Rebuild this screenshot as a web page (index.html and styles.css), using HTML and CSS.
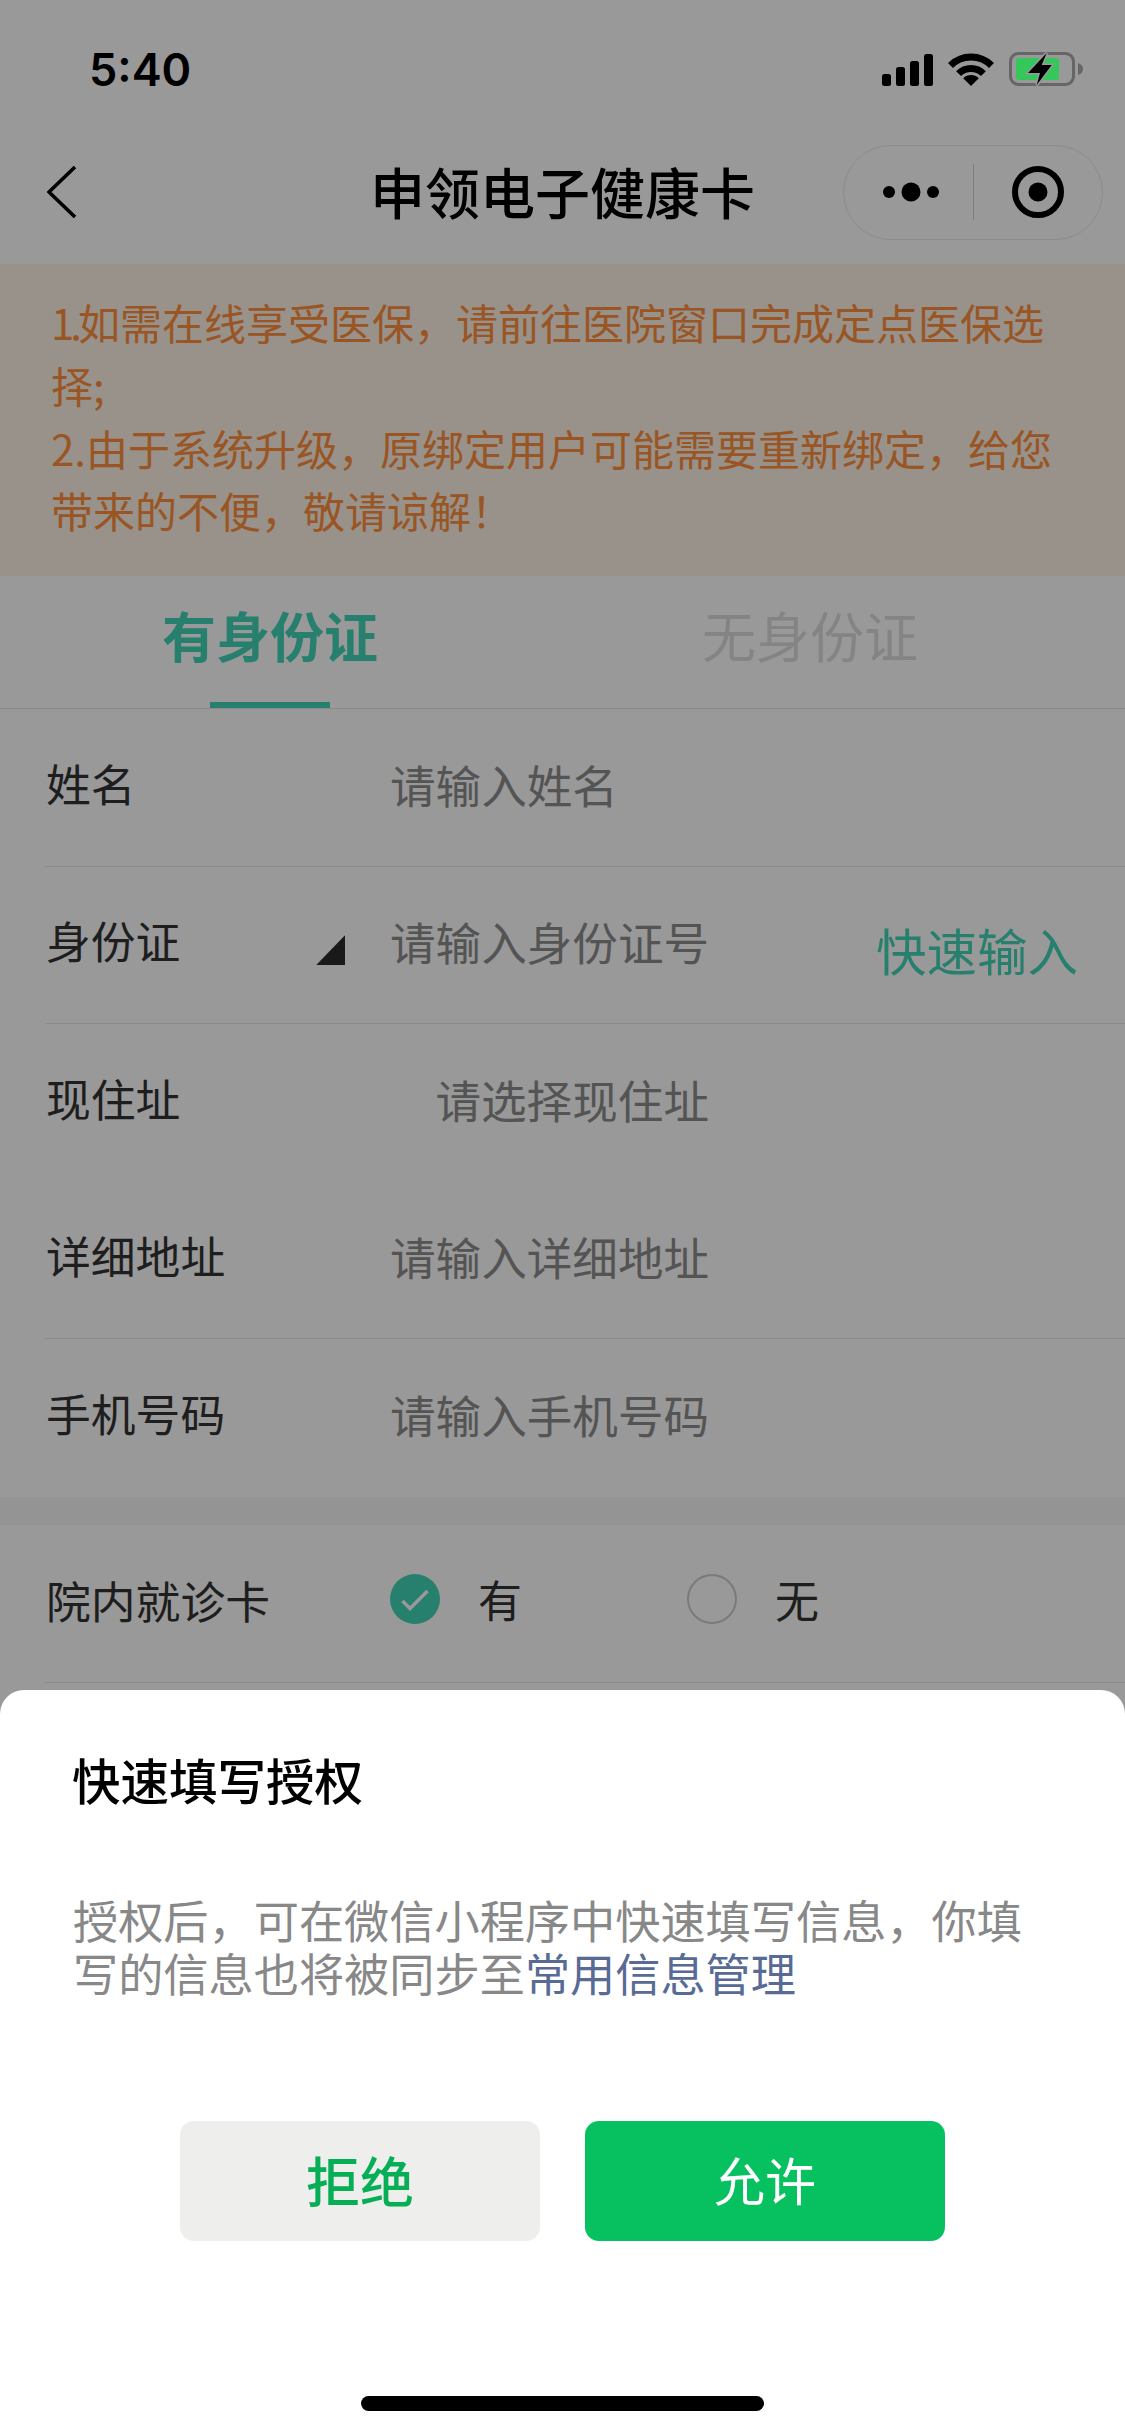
FILE: index.html
```html
<!DOCTYPE html>
<html lang="zh-CN">
<head>
    <meta charset="UTF-8">
    <meta name="viewport" content="width=device-width, initial-scale=1.0">
    <title>申领电子健康卡</title>
    <link rel="stylesheet" href="styles.css">
</head>
<body>
    <div class="status-bar">
        <span class="status-time">5:40</span>
        <div class="status-icons">
            <svg width="51" height="32" viewBox="0 0 51 32">
                <rect x="0" y="20" width="9" height="12" rx="2.5"/>
                <rect x="14" y="13" width="9" height="19" rx="2.5"/>
                <rect x="28" y="7" width="9" height="25" rx="2.5"/>
                <rect x="42" y="0" width="9" height="32" rx="2.5"/>
            </svg>
            <svg width="46" height="33" viewBox="0 0 46 33">
                <path d="M2.5 12.5A29 29 0 0 1 43.5 12.5" fill="none" stroke="#000" stroke-width="7"/>
                <path d="M10.6 20.6A17.5 17.5 0 0 1 35.4 20.6" fill="none" stroke="#000" stroke-width="7"/>
                <path d="M23 33L15.2 25.2A11 11 0 0 1 30.8 25.2Z"/>
            </svg>
            <svg width="74" height="34" viewBox="0 0 74 34">
                <rect x="1.5" y="1.5" width="63" height="31" rx="8" fill="none" stroke="#666" stroke-width="3"/>
                <rect x="7" y="6" width="43" height="22" rx="3" fill="#34c759"/>
                <path d="M69 11c3 1 5 3 5 6s-2 5-5 6z" fill="#666"/>
                <path d="M37.7 1L19 21H31L27.7 33L42.7 13H32.7Z" stroke="#999" stroke-width="3" paint-order="stroke"/>
            </svg>
        </div>
    </div>

    <header class="nav-bar">
        <svg class="nav-back" width="30" height="52" viewBox="0 0 30 52">
            <path d="M28 1L2 26L28 51" fill="none" stroke="#000" stroke-width="3.6"/>
        </svg>
        <h1 class="nav-title">申领电子健康卡</h1>
        <div class="capsule">
            <div class="capsule-part capsule-more">
                <svg width="58" height="20" viewBox="0 0 58 20">
                    <circle cx="6" cy="10" r="6"/>
                    <circle cx="28" cy="10" r="9.5"/>
                    <circle cx="50" cy="10" r="6"/>
                </svg>
            </div>
            <div class="capsule-line"></div>
            <div class="capsule-part">
                <svg width="52" height="52" viewBox="0 0 52 52">
                    <circle cx="26" cy="26" r="23" fill="none" stroke="#000" stroke-width="6"/>
                    <circle cx="26" cy="26" r="9.5"/>
                </svg>
            </div>
        </div>
    </header>

    <main>
        <section class="notice">
            <p class="notice-line"><span class="num-one">1.</span><span>如需在线享受医保，请前往医院窗口完成定点医保选</span></p>
            <p>择;</p>
            <p>2.由于系统升级，原绑定用户可能需要重新绑定，给您</p>
            <p>带来的不便，敬请谅解！</p>
        </section>

        <div class="tabs">
            <div class="tab tab-active">有身份证</div>
            <div class="tab">无身份证</div>
        </div>

        <section class="form-section">
            <div class="form-row">
                <div class="form-label">姓名</div>
                <div class="form-field">请输入姓名</div>
            </div>
            <div class="form-row">
                <div class="form-label">身份证<span class="corner"></span></div>
                <div class="form-field">请输入身份证号</div>
                <div class="quick-input">快速输入</div>
            </div>
            <div class="form-row no-line">
                <div class="form-label">现住址</div>
                <div class="form-field field-right">请选择现住址</div>
            </div>
            <div class="form-row">
                <div class="form-label">详细地址</div>
                <div class="form-field">请输入详细地址</div>
            </div>
            <div class="form-row no-line">
                <div class="form-label">手机号码</div>
                <div class="form-field">请输入手机号码</div>
            </div>
        </section>

        <div class="section-gap"></div>

        <section class="form-section">
            <div class="form-row radio-row">
                <div class="form-label">院内就诊卡</div>
                <div class="radio-group">
                    <span class="radio radio-on">
                        <svg width="50" height="50" viewBox="0 0 50 50">
                            <path d="M12.5 27L20 34.5L37.5 17" fill="none" stroke="#fff" stroke-width="3.5"/>
                        </svg>
                    </span>
                    <span class="radio-text">有</span>
                </div>
                <div class="radio-group">
                    <span class="radio"></span>
                    <span class="radio-text">无</span>
                </div>
            </div>
        </section>
    </main>

    <div class="mask"></div>

    <div class="sheet">
        <h2 class="sheet-title">快速填写授权</h2>
        <div class="sheet-desc">
            <p>授权后，可在微信小程序中快速填写信息，你填</p>
            <p>写的信息也将被同步至<span class="sheet-link">常用信息管理</span></p>
        </div>
        <div class="sheet-buttons">
            <button class="btn btn-deny">拒绝</button>
            <button class="btn btn-allow">允许</button>
        </div>
        <div class="home-bar"></div>
    </div>
</body>
</html>
```

FILE: styles.css
```css
* {
    box-sizing: border-box;
}
html, body {
    margin: 0;
    padding: 0;
}
body {
    position: relative;
    width: 1125px;
    height: 2436px;
    overflow: hidden;
    background: #fff;
    font-family: "Noto Sans CJK SC", "Liberation Sans", sans-serif;
    color: #333;
}
p, h1, h2 {
    margin: 0;
}

/* status bar stays above the mask */
.status-bar {
    position: relative;
    z-index: 3;
    display: flex;
    justify-content: space-between;
    align-items: center;
    height: 120px;
    padding: 18px 42px 0 89px;
}
.status-time {
    font-family: Inter, "Liberation Sans", sans-serif;
    font-size: 45px;
    font-weight: 600;
    color: #000;
}
.status-icons {
    display: flex;
    align-items: flex-end;
    gap: 15px;
}

.nav-bar {
    display: grid;
    grid-template-columns: 1fr auto 1fr;
    align-items: center;
    height: 144px;
    padding: 0 22px;
}
.nav-back {
    margin-left: 25px;
}
.nav-title {
    margin-bottom: 5px;
    font-size: 55px;
    font-weight: 500;
    color: #000;
}
.capsule {
    justify-self: end;
    display: flex;
    align-items: center;
    width: 260px;
    height: 95px;
    border: 1px solid #e8e8e8;
    border-radius: 48px;
}
.capsule-part {
    flex: 1;
    display: flex;
    justify-content: center;
    align-items: center;
}
.capsule-more svg {
    margin-left: 7px;
}
.capsule-line {
    width: 1px;
    height: 56px;
    background: #d0d0d0;
}

.notice {
    height: 312px;
    padding: 27px 51px 0;
    background: #fdf3e6;
    color: #ff8f3c;
    font-size: 42px;
    line-height: 62.8px;
}
.notice-line {
    display: flex;
}
.num-one {
    letter-spacing: -4px;
}

.tabs {
    display: flex;
    height: 133px;
    border-bottom: 1px solid #e6e6e6;
}
.tab {
    position: relative;
    width: 540px;
    padding-top: 23px;
    text-align: center;
    font-size: 54px;
    line-height: 72px;
    color: #ddd;
}
.tab-active {
    font-weight: 700;
    color: #42d4b6;
}
.tab-active::after {
    content: "";
    position: absolute;
    left: 210px;
    bottom: 0;
    width: 120px;
    height: 6px;
    background: #42d4b6;
}

.form-section {
    padding-left: 45px;
}
.form-row {
    display: flex;
    align-items: center;
    height: 157.5px;
    padding-bottom: 7px;
    border-bottom: 1px solid #e6e6e6;
    font-size: 44.8px;
}
.no-line {
    border-bottom: none;
}
.form-label {
    position: relative;
    flex: 0 0 345px;
    margin-top: -3px;
    padding-left: 1px;
}
.corner {
    position: absolute;
    top: 28px;
    right: 45px;
    width: 29px;
    height: 30px;
    background: #2b2b2b;
    clip-path: polygon(100% 0, 100% 100%, 0 100%);
}
.form-field {
    width: 319px;
    font-size: 45.6px;
    color: #8c8c8c;
    white-space: nowrap;
}
.field-right {
    text-align: right;
}
.quick-input {
    margin-left: auto;
    margin-right: 47px;
    margin-top: 16px;
    font-size: 50.5px;
    color: #42d4b6;
}

.section-gap {
    height: 28px;
    background: #f7f7f7;
}

.radio-row {
    height: 158px;
    padding-bottom: 8px;
}
.radio-row .form-label {
    margin-top: 0;
}
.radio-group {
    display: flex;
    align-items: center;
    gap: 38px;
    width: 297px;
}
.radio {
    width: 50px;
    height: 50px;
    border: 2px solid #ccc;
    border-radius: 50%;
}
.radio-on {
    border: none;
    background: #42d4b6;
}
.radio-on svg {
    display: block;
}
.radio-text {
    font-size: 44px;
}

.mask {
    position: absolute;
    inset: 0;
    z-index: 2;
    background: rgba(0, 0, 0, 0.4);
}

.sheet {
    position: absolute;
    top: 1690px;
    left: 0;
    right: 0;
    bottom: 0;
    z-index: 4;
    padding-top: 54px;
    background: #fff;
    border-radius: 24px 24px 0 0;
}
.sheet-title {
    padding-left: 72px;
    font-size: 48.5px;
    font-weight: 500;
    line-height: 70px;
    color: #000;
}
.sheet-desc {
    margin-top: 79px;
    padding-left: 73px;
    font-size: 45.2px;
    line-height: 53px;
    color: #888;
}
.sheet-link {
    color: #576b95;
}
.sheet-buttons {
    display: flex;
    justify-content: center;
    gap: 45px;
    margin-top: 122px;
}
.btn {
    width: 360px;
    height: 120px;
    padding: 0 0 4px;
    border: none;
    border-radius: 14px;
    font-family: inherit;
    font-size: 51px;
}
.btn-deny {
    background: #eeeeec;
    color: #06ae56;
    font-size: 54px;
    font-weight: 500;
}
.btn-allow {
    background: #07c160;
    color: #fff;
}
.home-bar {
    width: 403px;
    height: 15px;
    margin: 155px auto 0;
    border-radius: 8px;
    background: #000;
}
```
